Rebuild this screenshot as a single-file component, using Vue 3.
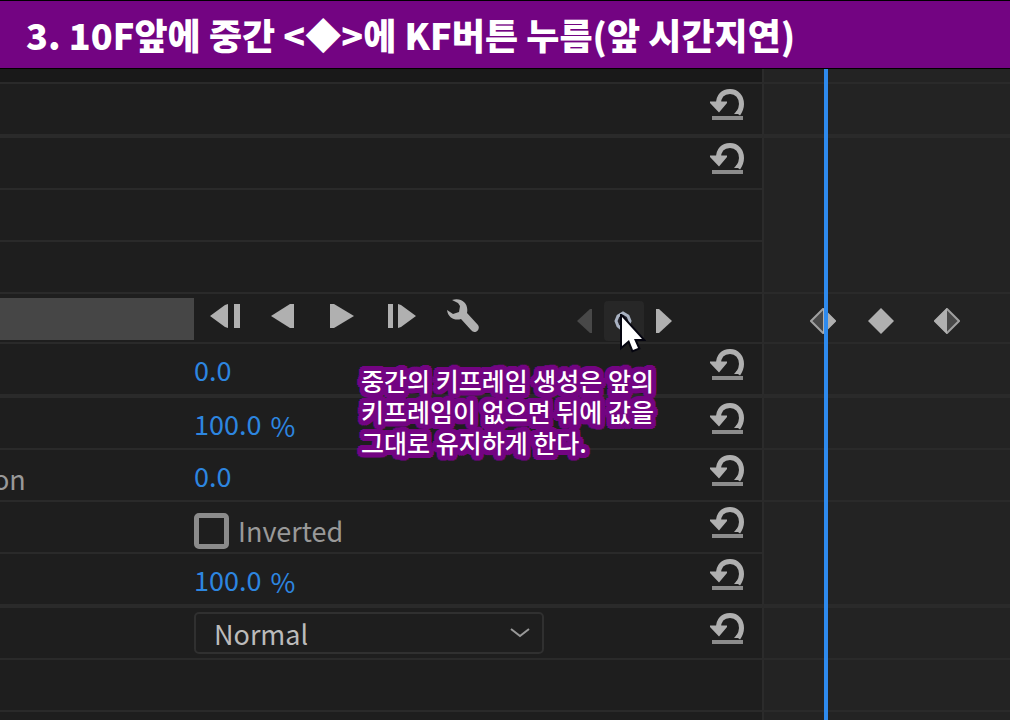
<script setup>
import { ref } from 'vue'

const blend = ref('Normal')
const inverted = ref(false)

const rows = [
  { kind: 'strip' },
  { kind: 'blank', reset: true, thick: true, wide: true },
  { kind: 'blank', reset: true },
  { kind: 'blank' },
  { kind: 'blank', wide: true },
  { kind: 'track', wide: true },
  { kind: 'value', value: '0.0', reset: true, thick: true, wide: true },
  { kind: 'value', value: '100.0', unit: '%', reset: true, wide: true },
  { kind: 'value', value: '0.0', label: 'on', reset: true, wide: true },
  { kind: 'check', reset: true },
  { kind: 'value', value: '100.0', unit: '%', reset: true, thick: true, wide: true },
  { kind: 'select', reset: true, wide: true },
  { kind: 'blank', wide: true },
  { kind: 'rest' },
]
</script>

<template>
  <main class="page">
    <h1 class="banner">3. 10F앞에 중간 &lt;◆&gt;에 KF버튼 누름(앞 시간지연)</h1>
    <section class="panel">
      <div
        v-for="(row, i) in rows"
        :key="i"
        class="row"
        :class="[row.kind, { thick: row.thick, wide: row.wide }]"
      >
        <div class="controls">
          <div class="label" :class="{ filled: row.kind === 'track' }">{{ row.label }}</div>

          <div v-if="row.kind === 'track'" class="content tools">
            <button class="tool" aria-label="Track one frame backward">
              <svg width="30" height="24" viewBox="0 0 30 24"><path d="M0 12 15 1 18 0V24L15 23ZM24 0H30V24H24Z" /></svg>
            </button>
            <button class="tool" aria-label="Track backward">
              <svg width="24" height="24" viewBox="0 0 24 24"><path d="M0 12 19 0H23V24H19Z" /></svg>
            </button>
            <button class="tool" aria-label="Track forward">
              <svg width="28" height="24" viewBox="0 0 28 24"><path d="M28 12 8 0H4V24H8Z" /></svg>
            </button>
            <button class="tool" aria-label="Track one frame forward">
              <svg width="31" height="24" viewBox="0 0 31 24"><path d="M31 12 16 1 13 0V24L16 23ZM3 0H8V24H3Z" /></svg>
            </button>
            <button class="tool" aria-label="Tracking options">
              <svg width="33" height="34" viewBox="0 0 33 34">
                <path d="M5 1C14-2 22 4 20 14L31 26C34 30 28 36 24 31L14 20C8 22 1 19 0 11L6 15 12 13 13 7 11 4Z" />
              </svg>
            </button>
            <div class="keynav">
              <button class="tool dim" aria-label="Previous keyframe">
                <svg width="16" height="24" viewBox="0 0 16 24"><path d="M1 12 14 0H16V24H14Z" /></svg>
              </button>
              <button class="tool keybutton" aria-label="Add keyframe">
                <svg width="20" height="22" viewBox="0 0 20 22"><path class="ring" d="M9 3 14 6 16 11 14 16 9 20 4 16 2 11 4 6Z" /></svg>
                <svg class="cursor" width="26" height="40" viewBox="0 0 26 40" aria-hidden="true">
                  <path d="M2 3V32L9 26 13 36 18 34 14 25H22Z" />
                </svg>
              </button>
              <button class="tool" aria-label="Next keyframe">
                <svg width="16" height="24" viewBox="0 0 16 24"><path d="M16 12 3 0H0V24H3Z" /></svg>
              </button>
            </div>
          </div>

          <div v-else-if="row.kind === 'value'" class="content number">
            <span>{{ row.value }}</span><span v-if="row.unit" class="unit">{{ row.unit }}</span>
          </div>

          <label v-else-if="row.kind === 'check'" class="content option">
            <input v-model="inverted" type="checkbox" />Inverted
          </label>

          <div v-else-if="row.kind === 'select'" class="content">
            <div class="dropdown">
              <select v-model="blend" aria-label="Blend mode">
                <option>Normal</option>
              </select>
              <svg width="20" height="11" viewBox="0 0 20 11" aria-hidden="true"><path d="M1 2 10 9 19 2" /></svg>
            </div>
          </div>

          <div v-else class="content"></div>

          <button v-if="row.reset" class="reset" aria-label="Reset parameter">
            <svg width="34" height="32" viewBox="0 0 34 32">
              <path class="arc" d="M8.5 15C8.5 7 13 2.5 20 2.5C27 2.5 31.500 8 31.500 15Q31.500 20 28 25" />
              <path d="M0 12.500H17V14L9 23.500 0 14ZM24 25 27 21.500 31 25Z" />
              <path class="base" d="M2 27H33V31H2Z" />
            </svg>
          </button>
        </div>

        <div class="lane">
          <template v-if="row.kind === 'track'">
            <svg class="key first" viewBox="0 0 26 26"><path class="hollow" d="M13 1 25 13 13 25 1 13Z" /><path d="M13 0 26 13 13 26Z" /></svg>
            <svg class="key second" viewBox="0 0 26 26"><path d="M13 0 26 13 13 26 0 13Z" /></svg>
            <svg class="key third" viewBox="0 0 26 26"><path class="hollow" d="M13 1 25 13 13 25 1 13Z" /><path d="M13 0V26L0 13Z" /></svg>
          </template>
        </div>
      </div>
      <div class="playhead"></div>
      <p class="callout">중간의 키프레임 생성은 앞의<br />키프레임이 없으면 뒤에 값을<br />그대로 유지하게 한다.</p>
    </section>
  </main>
</template>

<style>
body {
  margin: 0;
  background: #1e1e1e;
}
</style>

<style scoped>
.page {
  min-height: 100vh;
  display: flex;
  flex-direction: column;
  overflow: hidden;
  background: #1e1e1e;
  color: #999;
  font-family: "Noto Sans CJK KR", sans-serif;
  font-size: 27px;
  line-height: 40px;
}
.banner {
  margin: 0;
  padding: 0 26px;
  border: solid #000;
  border-width: 1px 0;
  background: #730482;
  color: #fff;
  font-size: 36px;
  font-weight: 900;
  line-height: 67px;
  white-space: nowrap;
}
.panel {
  position: relative;
  flex: 1;
  display: flex;
  flex-direction: column;
}
.row {
  box-sizing: border-box;
  height: 52px;
  display: grid;
  grid-template-columns: minmax(0, 1fr) 248px;
}
.row.strip {
  height: 15px;
}
.row.track {
  height: 50px;
}
.row.thick {
  height: 54px;
}
.row.rest {
  flex: 1;
  height: auto;
  min-height: 8px;
}
.controls {
  display: flex;
  align-items: flex-start;
  border-bottom: 2px solid #2a2a2a;
}
.strip .controls {
  background: #191919;
}
.lane {
  position: relative;
  border-left: 2px solid #2b2b2b;
  background: #232323;
}
.wide .lane,
.strip .lane {
  border-bottom: 2px solid #2a2a2a;
}
.thick .controls,
.thick .lane {
  border-bottom-width: 4px;
}
.rest .controls {
  border-bottom: 0;
}
.label {
  box-sizing: border-box;
  width: 194px;
  height: 40px;
  margin-top: 9px;
  text-indent: -7px;
}
.strip .label,
.rest .label {
  display: none;
}
.label.filled {
  height: 42px;
  margin-top: 4px;
  background: #464646;
}
.content {
  flex: 1;
  display: flex;
}
button {
  padding: 0;
  border: 0;
  background: none;
}
svg {
  display: block;
  fill: #b0b0b0;
}
.tools {
  align-items: center;
  height: 44px;
  padding-left: 16px;
  gap: 31px;
}
.keynav {
  display: flex;
  align-items: center;
  gap: 12px;
  margin-left: auto;
  margin-right: 90px;
  padding-top: 10px;
}
.dim svg {
  fill: #484848;
}
.keybutton {
  position: relative;
  width: 40px;
  height: 40px;
  display: grid;
  place-items: center;
  border-radius: 4px;
  background: #272727;
}
.ring {
  fill: #23232b;
  stroke: #a9b2c2;
  stroke-width: 3;
}
.cursor {
  position: absolute;
  left: 16px;
  top: 13px;
}
.cursor path {
  fill: #fff;
  stroke: #050510;
  stroke-width: 4;
  paint-order: stroke;
}
.number {
  margin-top: 6px;
  gap: 9px;
  color: #2d86e0;
}
.unit {
  margin-top: 2px;
}
.option {
  align-items: center;
  gap: 9px;
  height: 40px;
  margin-top: 9px;
}
input {
  appearance: none;
  box-sizing: border-box;
  width: 35px;
  height: 36px;
  margin: 0;
  border: 5px solid #8b8b8b;
  border-radius: 5px;
}
.dropdown {
  position: relative;
  width: 350px;
  margin-top: 4px;
}
select {
  appearance: none;
  box-sizing: border-box;
  width: 100%;
  height: 42px;
  padding: 0 18px;
  border: 2px solid #303030;
  border-radius: 5px;
  background: #1e1e1e;
  color: #bbb;
  font: inherit;
}
.dropdown svg {
  position: absolute;
  right: 14px;
  top: 15px;
  fill: none;
  stroke: #999;
  stroke-width: 2;
  pointer-events: none;
}
.reset {
  margin: 5px 18px 0 0;
}
.arc {
  fill: none;
  stroke: #b0b0b0;
  stroke-width: 5;
}
.base {
  fill: #8c8c8c;
}
.key {
  position: absolute;
  top: 14px;
  width: 26px;
  height: 26px;
}
.first {
  left: 46px;
}
.second {
  left: 104px;
}
.third {
  left: 170px;
}
.hollow {
  fill: #484848;
  stroke: #a0a0a0;
  stroke-width: 2;
}
.playhead {
  position: absolute;
  top: 0;
  bottom: 0;
  right: 182px;
  width: 4px;
  background: #2e8aed;
}
.callout {
  position: absolute;
  top: 296px;
  left: 361px;
  margin: 0;
  color: #fff;
  font-size: 25px;
  font-weight: 500;
  line-height: 31px;
  white-space: nowrap;
  text-shadow:
    5px 0 #730482,
    5px 2px #730482,
    4px 4px #730482,
    2px 5px #730482,
    0 5px #730482,
    -2px 5px #730482,
    -4px 4px #730482,
    -5px 2px #730482,
    -5px 0 #730482,
    -5px -2px #730482,
    -4px -4px #730482,
    -2px -5px #730482,
    0 -5px #730482,
    2px -5px #730482,
    4px -4px #730482,
    5px -2px #730482,
    2px 2px #730482,
    -2px 2px #730482,
    2px -2px #730482,
    -2px -2px #730482;
}
</style>
